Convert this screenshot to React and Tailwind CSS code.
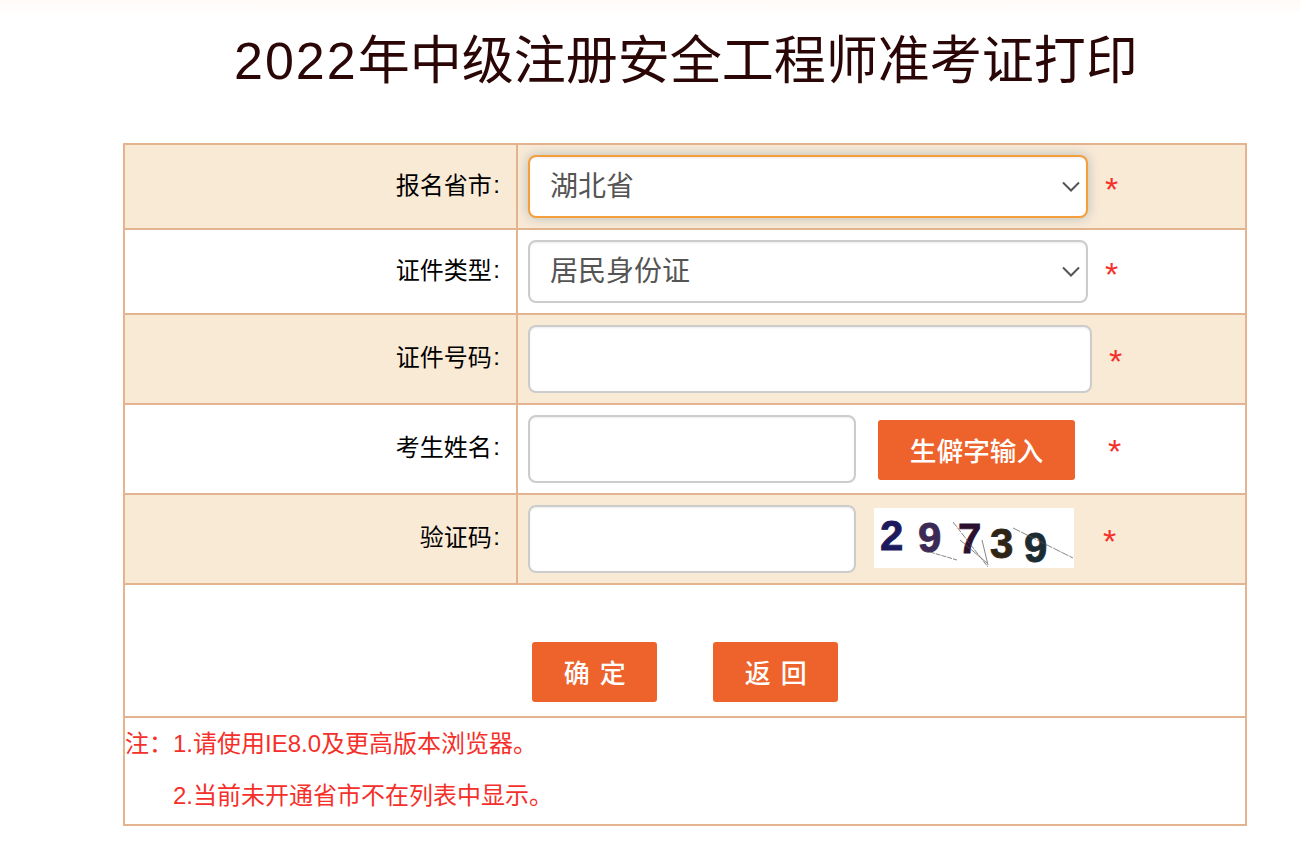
import React from "react";

const FONT = "font-['Liberation_Sans','Noto_Sans_CJK_SC',sans-serif]";
const BORDER = "border-[#e4b38f]";

function Label({ children }) {
  return (
    <div className={`w-[393px] shrink-0 h-full flex items-center justify-end pr-[16px] border-r-2 ${BORDER} text-[24px] text-black`}>
      <span className="-translate-y-[1px]">{children}</span>
      <span className="ml-[1.5px] -translate-y-[2px]">:</span>
    </div>
  );
}

function Star({ className = "" }) {
  return <span className={`text-[#f5302a] text-[34px] leading-none translate-y-[2px] ${className}`}>*</span>;
}

function Row({ h, bg, label, children }) {
  return (
    <div className={`flex items-center ${h} ${bg ? "bg-[#f9ead6]" : "bg-white"} border-b-2 ${BORDER}`}>
      <Label>{label}</Label>
      <div className="flex items-center h-full pl-[10px] grow">{children}</div>
    </div>
  );
}

function Select({ value, focused }) {
  return (
    <div className="relative w-[560px] h-[63px]">
      <select
        defaultValue={value}
        className={`appearance-none w-full h-full rounded-lg bg-white border-2 pl-[20px] pr-10 text-[28px] text-[#555] outline-none ${FONT} ${
          focused
            ? "border-[#f59e3c] shadow-[inset_0_1px_2px_rgba(0,0,0,0.08),0_0_12px_rgba(82,120,140,0.4)]"
            : "border-[#ccc] shadow-[inset_0_1px_2px_rgba(0,0,0,0.08)]"
        }`}
      >
        <option>{value}</option>
      </select>
      <svg className="absolute right-[8px] top-[26px] pointer-events-none" width="18" height="11" viewBox="0 0 18 11" fill="none">
        <path d="M1 1.5 L9 9.5 L17 1.5" stroke="#555" strokeWidth="2" />
      </svg>
    </div>
  );
}

function Input({ w }) {
  return (
    <input
      type="text"
      className={`${w} h-[68px] rounded-lg bg-white border-2 border-[#ccc] shadow-[inset_0_1px_2px_rgba(0,0,0,0.08)] outline-none`}
    />
  );
}

function Btn({ children, className = "" }) {
  return (
    <button type="button" className={`h-[60px] bg-[#ee622b] rounded-[3px] text-white font-medium ${FONT} ${className}`}>
      {children}
    </button>
  );
}

function Captcha() {
  const font = { fontFamily: "'Liberation Sans', sans-serif", fontWeight: 700, fontSize: 42, strokeWidth: 0.8 };
  return (
    <svg width="200" height="60" viewBox="0 0 200 60" className="block overflow-visible ml-[18px] shrink-0 -translate-y-[1px]">
      <rect width="200" height="60" fill="#fff" />
      <text x="6" y="42" fill="#1c1a5c" stroke="#1c1a5c" style={font}>2</text>
      <text x="44" y="44" fill="#3b2a55" stroke="#3b2a55" style={font}>9</text>
      <text x="84" y="45" fill="#2c1030" stroke="#2c1030" style={font}>7</text>
      <text x="116" y="50" fill="#2e2516" stroke="#2e2516" style={font}>3</text>
      <text x="150" y="54" fill="#1d2c33" stroke="#1d2c33" style={font}>9</text>
      <g stroke="#555" strokeWidth="1" fill="none" opacity="0.7">
        <path d="M79 14 L114 59" strokeDasharray="6 1" />
        <path d="M86 32 L113 55" />
        <path d="M56 44 L83 52" strokeDasharray="5 1" />
        <path d="M139 20 L199 50" strokeDasharray="8 1" />
        <path d="M108 32 L114 57" />
      </g>
    </svg>
  );
}

export default function App() {
  return (
    <div className={`w-[1300px] h-[852px] bg-white overflow-hidden ${FONT}`}>
      <div className="h-[14px] bg-gradient-to-b from-[#fffaf6] to-white" />
      <h1 className="h-[95px] pl-[234px] pt-[16px] text-[52px] leading-[62px] text-[#2b0606] font-normal whitespace-nowrap">
        <span className="tracking-[2px]">2022</span>年中级注册安全工程师准考证打印
      </h1>
      <div className="h-[34px]" />
      <div className={`ml-[123px] w-[1124px] border-2 border-b-0 ${BORDER}`}>
        <Row h="h-[85px]" bg label="报名省市">
          <Select value="湖北省" focused />
          <Star className="ml-[17px]" />
        </Row>
        <Row h="h-[85px]" label="证件类型">
          <Select value="居民身份证" />
          <Star className="ml-[17px]" />
        </Row>
        <Row h="h-[90px]" bg label="证件号码">
          <Input w="w-[564px]" />
          <Star className="ml-[17px]" />
        </Row>
        <Row h="h-[90px]" label="考生姓名">
          <Input w="w-[328px]" />
          <Btn className="w-[197px] ml-[22px] translate-y-[1px] text-[26.7px] pt-[4px]">生僻字输入</Btn>
          <Star className="ml-[33px]" />
        </Row>
        <Row h="h-[90px]" bg label="验证码">
          <Input w="w-[328px]" />
          <Captcha />
          <Star className="ml-[29px]" />
        </Row>
        <div className={`h-[133px] border-b-2 ${BORDER} flex justify-center pt-[57px]`}>
          <div className="flex gap-[56px]">
            <Btn className="w-[125px] text-[26px] tracking-[1.5px] pt-[4px] pl-[2px]">确 定</Btn>
            <Btn className="w-[125px] text-[26px] tracking-[1.5px] pt-[4px] pl-[2px]">返 回</Btn>
          </div>
        </div>
        <div className={`h-[108px] border-b-2 ${BORDER} text-[24px] text-[#f5302a]`}>
          <div className="h-[52px] leading-[52px] whitespace-nowrap">注：1.请使用IE8.0及更高版本浏览器。</div>
          <div className="h-[52px] leading-[52px] pl-[48px] whitespace-nowrap">2.当前未开通省市不在列表中显示。</div>
        </div>
      </div>
    </div>
  );
}
